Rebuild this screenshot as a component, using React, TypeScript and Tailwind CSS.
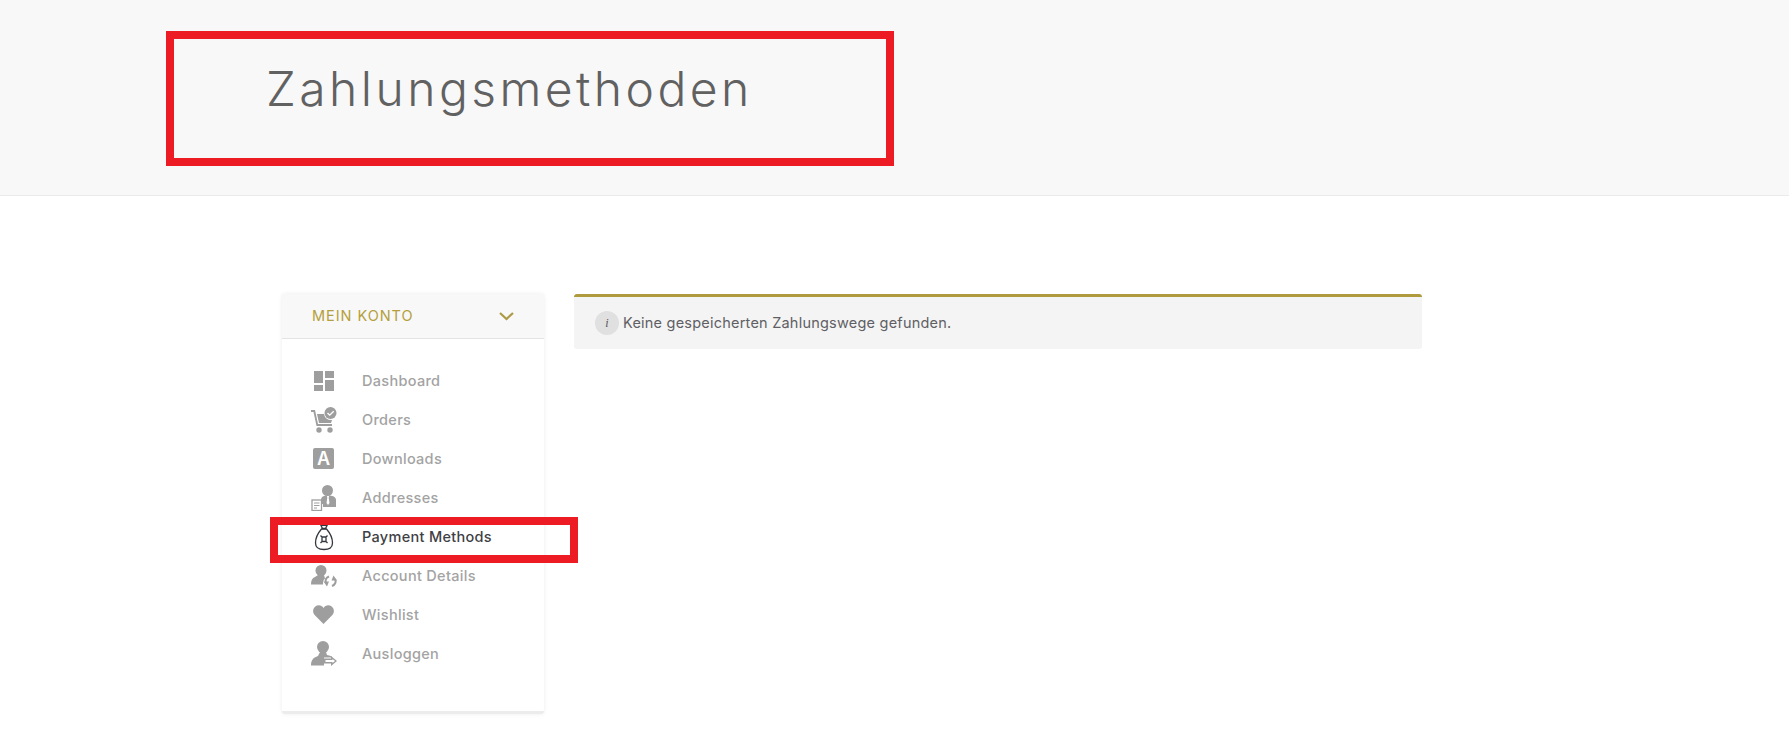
import React from "react";

const font = "font-['Inter','Liberation_Sans',sans-serif]";

function DashboardIcon() {
  return (
    <svg width="20" height="20" viewBox="0 0 20 20" fill="#9e9e9e">
      <rect x="0" y="0" width="9" height="12" />
      <rect x="11" y="0" width="9" height="7" />
      <rect x="0" y="14" width="9" height="6" />
      <rect x="11" y="9" width="9" height="11" />
    </svg>
  );
}

function OrdersIcon() {
  return (
    <svg width="26" height="26" viewBox="0 0 26 26" fill="#9e9e9e">
      <path d="M0 3h4l3 14h14v2H5.500L2.500 5H0z" />
      <path d="M6 7h7a7 7 0 0 0 8 6l-1 3H8z" />
      <circle cx="8" cy="23" r="2.700" />
      <circle cx="19" cy="23" r="2.700" />
      <circle cx="19.500" cy="6" r="6" />
      <path d="M16.500 6l2.200 2.200 4-4" fill="none" stroke="#fff" strokeWidth="1.300" />
    </svg>
  );
}

function DownloadsIcon() {
  return (
    <div className="flex h-[21px] w-[21px] items-center justify-center rounded-[2px] bg-[#9e9e9e] text-[18px] leading-none font-semibold text-white">
      A
    </div>
  );
}

function AddressesIcon() {
  return (
    <svg width="26" height="26" viewBox="0 0 26 26" fill="#9e9e9e">
      <circle cx="16.500" cy="5.500" r="5.500" />
      <path d="M10 19v-4c0-3 2-4 5-4.500h4c3 .5 6 1.500 6 4.500v7H12v-3z" />
      <path d="M16 11h2l-.3 2 .8 5-1.500 2-1.500-2 .8-5z" fill="#fff" />
      <rect x="1" y="15" width="9.500" height="10.500" fill="#fff" stroke="#9e9e9e" strokeWidth="1.300" />
      <path d="M3 18h5.500M3 20.500h5.500M3 23h3" stroke="#9e9e9e" />
    </svg>
  );
}

function PaymentIcon() {
  return (
    <svg width="20" height="28" viewBox="0 0 20 28" fill="none" stroke="#33383f" strokeWidth="1.300">
      <path d="M6.500 1.500c1.500 1 5.500 1 7 0l-2 4h-3z" />
      <path d="M7.500 6C4 10 1.500 15 1.500 20c0 5 3.500 6.500 8.500 6.500s8.500-1.500 8.500-6.500c0-5-2.500-10-6-14z" />
      <path d="M6.500 12.500l1.500 1.500h4l1.500-1.500M6.500 20L8 18.500h4l1.500 1.500M8 14v4.500M12 14v4.500" />
    </svg>
  );
}

function AccountIcon() {
  return (
    <svg width="26" height="22" viewBox="0 0 26 22" fill="#9e9e9e">
      <circle cx="10" cy="5.500" r="5.500" />
      <path d="M7 10h6l1 3.500c-1.500 1-2 3-2 6H0c0-4 1-6.500 4-7.500z" />
      <path d="M18 11.500c-3 1-4 3.500-3 6.500" fill="none" stroke="#9e9e9e" strokeWidth="2" />
      <path d="M12.500 16.500l5.500 0-2 5z" />
      <path d="M21 21c3-1 4.500-4 3-7" fill="none" stroke="#9e9e9e" strokeWidth="2" />
      <path d="M26 15.500h-5.500l2-5z" />
    </svg>
  );
}

function WishlistIcon() {
  return (
    <svg width="21" height="19" viewBox="0 0 24 22" fill="#9e9e9e">
      <path d="M12 22 2 12C-1 9-.5 4 2.500 1.800 5.500-.5 10 0 12 3.500 14 0 18.500-.5 21.500 1.800 24.500 4 25 9 22 12z" />
    </svg>
  );
}

function LogoutIcon() {
  return (
    <svg width="26" height="25" viewBox="0 0 26 25" fill="#9e9e9e">
      <circle cx="12" cy="6" r="6" />
      <path d="M9 11h6l1 3c3 .5 5 1.500 5.500 2.500H13v8H0c0-5 2-8 7-9.500z" />
      <path d="M13 17.500h7V15l6 5-6 5v-2.500h-7z" />
      <path d="M14.500 19h7v-1l2.500 2-2.500 2v-1h-7z" fill="#fff" />
    </svg>
  );
}

const menu = [
  { label: "Dashboard", icon: <DashboardIcon /> },
  { label: "Orders", icon: <OrdersIcon /> },
  { label: "Downloads", icon: <DownloadsIcon /> },
  { label: "Addresses", icon: <AddressesIcon /> },
  { label: "Payment Methods", icon: <PaymentIcon />, active: true },
  { label: "Account Details", icon: <AccountIcon /> },
  { label: "Wishlist", icon: <WishlistIcon /> },
  { label: "Ausloggen", icon: <LogoutIcon /> },
];

export default function App() {
  return (
    <div className={`relative h-[745px] overflow-hidden bg-white ${font}`}>
      <header className="h-[196px] border-b border-[#ebebeb] bg-[#f8f8f8] pt-[59px] pl-[266px]">
        <h1 className="text-[48px] leading-[60px] font-light tracking-[3.45px] text-[#616161]">Zahlungsmethoden</h1>
      </header>

      <div className="flex items-start gap-[30px] pt-[98px] pl-[282px]">
        <aside className="h-[420px] w-[262px] rounded-[3px] border-b-[3px] border-[#ececec] bg-white shadow-[0_0_4px_rgba(0,0,0,0.08)]">
          <div className="flex h-[45px] items-center justify-between border-b border-[#e4e4e4] bg-[#f8f8f8] pr-[30px] pl-[30px]">
            <span className="text-[14.500px] tracking-[0.95px] text-[#b59f3b]">MEIN KONTO</span>
            <svg width="15" height="9" viewBox="0 0 15 9" fill="none" stroke="#ad9a45" strokeWidth="2.200">
              <path d="M1 1l6.500 6 6.500-6" />
            </svg>
          </div>
          <ul className="pt-[22px]">
            {menu.map((item) => (
              <li key={item.label} className="flex h-[39px] items-center">
                <span className="flex w-[80px] justify-center pl-[3px]">{item.icon}</span>
                <span
                  className={
                    item.active
                      ? "text-[14.500px] font-medium tracking-[0.3px] text-[#3f3f46]"
                      : "text-[14.500px] font-medium tracking-[0.3px] text-[#a3a3a3]"
                  }
                >
                  {item.label}
                </span>
              </li>
            ))}
          </ul>
        </aside>

        <div className="flex h-[55px] w-[848px] items-center gap-[4px] rounded-[3px] border-t-[3px] border-[#b09a3e] bg-[#f4f4f4] pl-[21px]">
          <span className="flex h-6 w-6 items-center justify-center rounded-full bg-[#e0e0e0] font-['Liberation_Serif',serif] text-[12px] text-[#555] italic">
            i
          </span>
          <span className="text-[14.500px] tracking-[0.22px] text-[#5f5f64]">
            Keine gespeicherten Zahlungswege gefunden.
          </span>
        </div>
      </div>

      {/* red annotation frames on top of the page */}
      <div className="absolute top-[31px] left-[166px] h-[135px] w-[728px] border-[8px] border-[#ed1c24]" />
      <div className="absolute top-[517px] left-[270px] h-[46px] w-[308px] border-[8px] border-[#ed1c24]" />
    </div>
  );
}
